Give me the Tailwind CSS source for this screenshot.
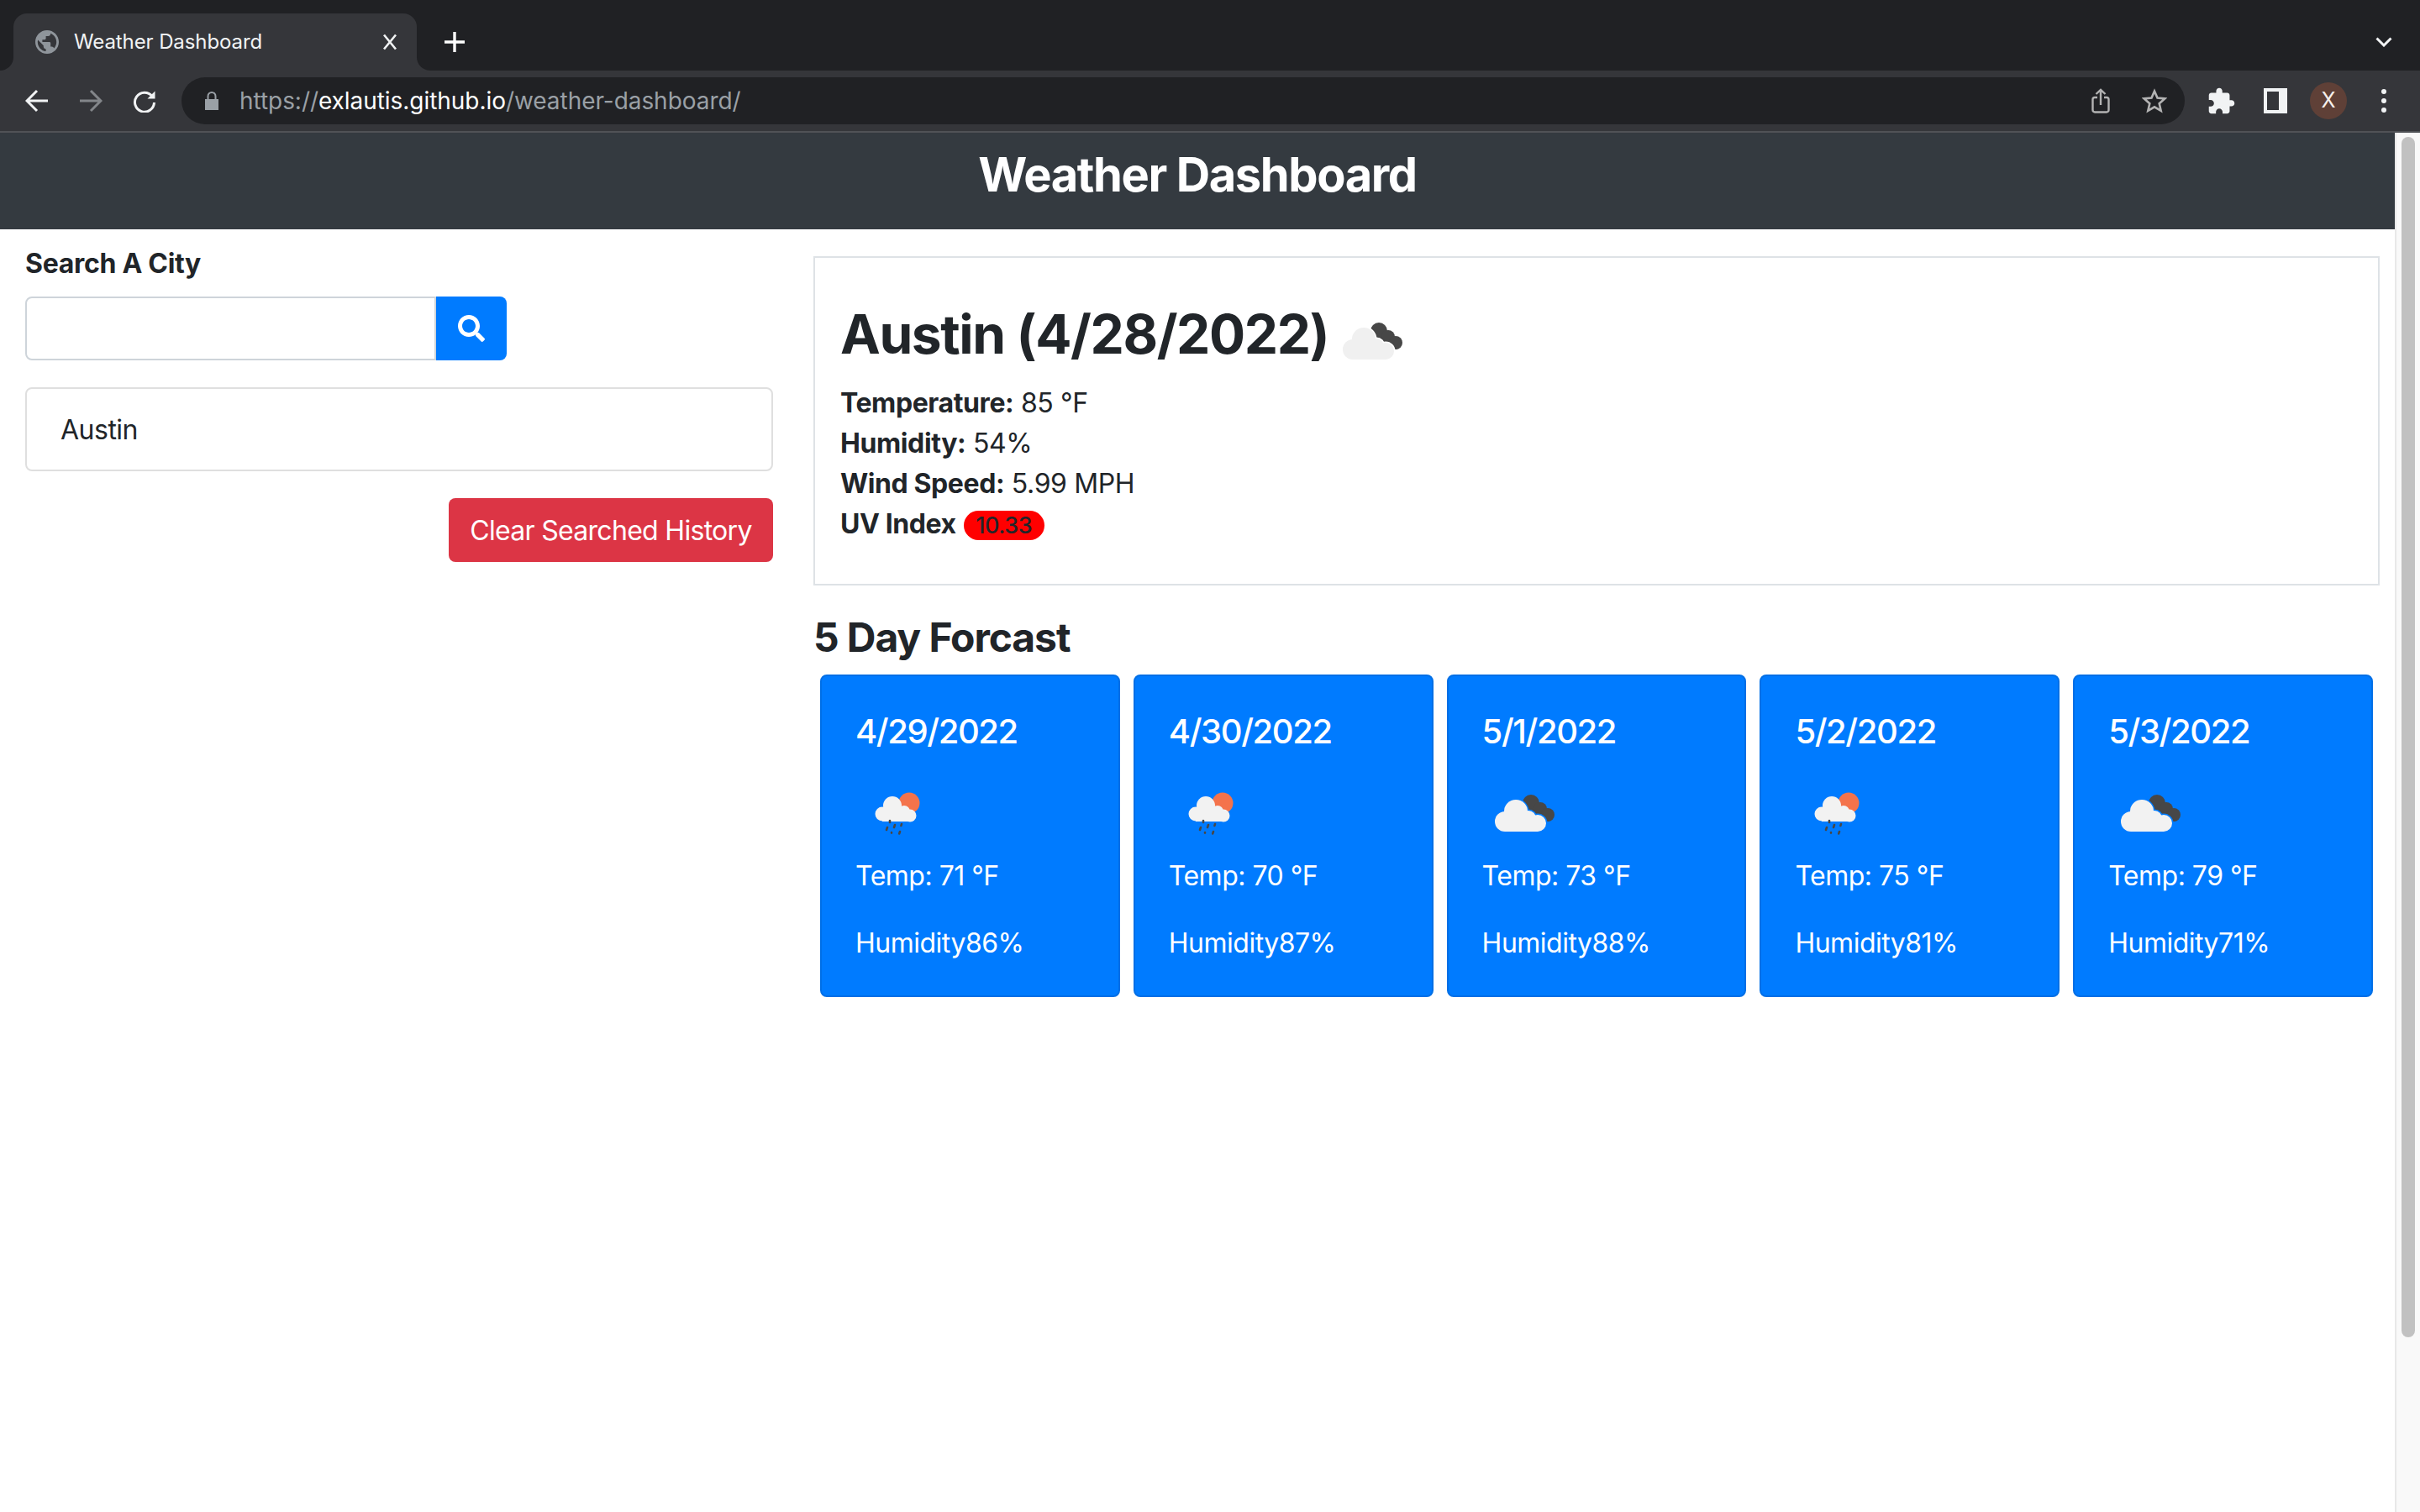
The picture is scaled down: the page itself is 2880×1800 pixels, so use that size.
<!DOCTYPE html>
<html lang="en">
<head>
<meta charset="utf-8">
<title>Weather Dashboard</title>
<script src="https://cdn.jsdelivr.net/npm/@tailwindcss/browser@4"></script>
</head>
<body class="w-[2880px] h-[1800px] overflow-hidden bg-white text-[#212529] font-['Inter','Liberation_Sans',sans-serif]">
<svg class="absolute w-0 h-0" aria-hidden="true">
  <defs>
    <mask id="gap" maskUnits="userSpaceOnUse" x="0" y="0" width="100" height="109">
      <rect width="100" height="109" fill="white"/>
      <g fill="black" stroke="black" stroke-width="3">
        <circle cx="27" cy="68" r="12"/><circle cx="40" cy="56" r="14"/><circle cx="55" cy="64" r="9"/><circle cx="66" cy="70" r="10"/>
      </g>
    </mask>
    <symbol id="cloudy" viewBox="0 0 100 109">
      <g fill="#474747" mask="url(#gap)">
        <circle cx="58" cy="46" r="10"/><circle cx="69" cy="53" r="8"/><circle cx="78" cy="60" r="8"/><path d="M50 46 L80 68 L70 68 L50 56Z"/>
      </g>
      <g fill="currentColor">
        <circle cx="27" cy="68" r="12"/><circle cx="40" cy="56" r="14"/><circle cx="55" cy="64" r="9"/><circle cx="66" cy="70" r="10"/><rect x="27" y="62" width="39" height="18"/>
      </g>
    </symbol>
    <symbol id="rain" viewBox="0 0 100 109">
      <circle cx="64" cy="46" r="12.5" fill="#f4734b"/>
      <g fill="#f2f2f2">
        <circle cx="32" cy="59" r="8.5"/><circle cx="44" cy="49" r="11"/><circle cx="58" cy="56" r="7"/><circle cx="65" cy="61" r="7.5"/><rect x="32" y="56" width="33" height="12"/>
      </g>
      <g stroke="#474747" stroke-width="2.6" stroke-linecap="round">
        <path d="M41 67v2M47 72l-1 3M38 75l-1 3M55 71l-.6 2M43 81v.6M53 80l-.8 2.4"/>
      </g>
    </symbol>
  </defs>
</svg>

<div class="h-[84px] bg-[#202124] flex items-end pl-4 relative">
  <div class="relative w-[480px] h-[68px] bg-[#35363a] rounded-t-2xl flex items-center pl-[26px] pr-[24px]">
    <span class="absolute left-[-16px] bottom-0 w-4 h-4 bg-[#35363a]"><span class="block w-4 h-4 bg-[#202124] rounded-br-2xl"></span></span>
    <span class="absolute right-[-16px] bottom-0 w-4 h-4 bg-[#35363a]"><span class="block w-4 h-4 bg-[#202124] rounded-bl-2xl"></span></span>
    <svg class="w-7 h-7 shrink-0" viewBox="2 2 20 20" fill="#8f959b"><path d="M12 2C6.48 2 2 6.48 2 12s4.48 10 10 10 10-4.48 10-10S17.52 2 12 2zm-1 17.93c-3.95-.49-7-3.85-7-7.93 0-.62.08-1.21.21-1.79L9 15v1c0 1.1.9 2 2 2v1.93zm6.9-2.54c-.26-.81-1-1.39-1.9-1.39h-1v-3c0-.55-.45-1-1-1H8v-2h2c.55 0 1-.45 1-1V7h2c1.1 0 2-.9 2-2v-.41c2.93 1.19 5 4.06 5 7.41 0 2.08-.8 3.97-2.1 5.39z"/></svg>
    <span class="ml-[18px] text-[24px] leading-none text-[#f1f3f4] flex-1 whitespace-nowrap tracking-[-0.1px]">Weather Dashboard</span>
    <svg class="w-4 h-5" viewBox="0 0 16 20" stroke="#f1f3f4" stroke-width="2.6" fill="none"><path d="M1 1.5 15 18.5M15 1.5 1 18.5"/></svg>
  </div>
  <svg class="ml-[32px] mb-[21px] w-[26px] h-[26px]" viewBox="0 0 26 26" stroke="#ffffff" stroke-width="3.4" fill="none"><path d="M13 1v24M1 13h24"/></svg>
  <svg class="absolute left-[2827px] top-[44px] w-5 h-3" viewBox="0 0 20 12" stroke="#f1f3f4" stroke-width="3" fill="none"><path d="M1.5 1.5 10 10l8.5-8.5"/></svg>
</div>

<div class="h-[74px] bg-[#35363a] border-b-2 border-[#505256] flex items-start">
  <div class="h-[72px] w-[216px] relative shrink-0 flex items-center pl-[30px] gap-[36px]">
    <svg class="w-7 h-7 shrink-0" viewBox="0 0 28 28" stroke="#f1f3f4" stroke-width="3" fill="none"><path d="M27 14H3M14 2 2 14l12 12"/></svg>
    <svg class="w-7 h-7 shrink-0" viewBox="0 0 28 28" stroke="#83868a" stroke-width="3" fill="none"><path d="M1 14h24M14 2l12 12-12 12"/></svg>
    <svg class="w-7 h-7 shrink-0" viewBox="0 0 28 28" stroke="#f1f3f4" stroke-width="3" fill="none"><path d="M23 8.5A11.5 11.5 0 1 0 25.5 16"/><path d="M26.5 2.5v9h-9z" fill="#f1f3f4" stroke="none"/></svg>
  </div>
  <div class="mt-2 w-[2384px] h-[56px] rounded-full bg-[#202124] flex items-center pl-[28px] pr-[20px] shrink-0">
    <svg class="w-4 h-[22px] shrink-0" viewBox="0 0 16 22" fill="#9aa0a6"><path d="M0 9h16v13H0z"/><path d="M3.5 10V5.5a4.5 4.5 0 0 1 9 0V10" fill="none" stroke="#9aa0a6" stroke-width="2"/></svg>
    <span class="ml-[25px] text-[28px] leading-none whitespace-nowrap text-[#9aa0a6] tracking-[-0.05px]">https://<span class="text-white">exlautis.github.io</span>/weather-dashboard/</span>
    <svg class="ml-auto w-[22px] h-[30px] shrink-0" viewBox="0 0 22 30" stroke="#b3b3b3" stroke-width="2.4" fill="none"><path d="M7 11H4a2.5 2.5 0 0 0-2.5 2.5V26A2.500 2.500 0 0 0 4 28.500h14a2.500 2.500 0 0 0 2.500-2.500V13.500A2.500 2.500 0 0 0 18 11h-3"/><path d="M11 20V2M5.500 7 11 1.800 16.500 7"/></svg>
    <svg class="ml-[38px] w-[30px] h-[30px] shrink-0" viewBox="0 0 30 30" stroke="#b3b3b3" stroke-width="2.600" fill="none"><path d="M15 3.500l3.500 8.100 8.800.8-6.600 5.800 2 8.600-7.700-4.500-7.700 4.500 2-8.600-6.600-5.800 8.800-.8z"/></svg>
    <span class="w-[1px]"></span>
  </div>
  <div class="h-[72px] flex-1 flex items-center pl-[28px] gap-[32px]">
    <svg class="w-8 h-8 shrink-0 mr-[2px]" viewBox="1.500 .5 22 22" fill="#f1f3f4"><path d="M20.500 11H19V7c0-1.100-.9-2-2-2h-4V3.500C13 2.120 11.880 1 10.500 1S8 2.120 8 3.500V5H4c-1.100 0-1.990.9-1.990 2v3.800H3.500c1.490 0 2.700 1.210 2.700 2.700s-1.210 2.700-2.700 2.700H2V20c0 1.100.9 2 2 2h3.800v-1.500c0-1.490 1.210-2.700 2.700-2.700 1.490 0 2.700 1.210 2.700 2.700V22H17c1.100 0 2-.9 2-2v-4h1.500c1.380 0 2.500-1.120 2.500-2.500S21.880 11 20.500 11z"/></svg>
    <span class="w-7 h-[30px] shrink-0 bg-[#f1f3f4] flex items-stretch pl-1 pr-[10px] py-1"><span class="flex-1 bg-[#35363a]"></span></span>
    <span class="w-11 h-11 shrink-0 -ml-[5px] rounded-full bg-[#5f4037] text-[#f6efec] text-[25px] flex items-center justify-center">X</span>
    <span class="w-[6px] shrink-0 ml-[9px] flex flex-col gap-[5px]"><span class="h-[6px] rounded-full bg-[#f1f3f4]"></span><span class="h-[6px] rounded-full bg-[#f1f3f4]"></span><span class="h-[6px] rounded-full bg-[#f1f3f4]"></span></span>
  </div>
</div>

<div class="flex h-[1642px]">
  <main class="w-[2850px] shrink-0">
    <header class="h-[115px] bg-[#343a40] flex items-start justify-center pt-[17px]">
      <h1 class="text-[56px] leading-[66px] font-bold text-white tracking-[-1.4px] whitespace-nowrap">Weather Dashboard</h1>
    </header>
    <div class="flex">
      <section class="w-[968px] shrink-0 pl-[30px] pt-[21px]">
        <h2 class="text-[32px] leading-[40px] font-bold tracking-[-0.3px]">Search A City</h2>
        <div class="mt-[19px] flex w-[573px] h-[76px]">
          <div class="flex-1 border-2 border-[#ced4da] rounded-l-lg bg-white"></div>
          <div class="w-[84px] rounded-r-lg bg-[#007bff] flex items-center justify-center">
            <svg class="w-8 h-8" viewBox="0 0 512 512" fill="#ffffff"><path d="M505 442.700L405.300 343c-4.500-4.500-10.600-7-17-7H372c27.600-35.300 44-79.700 44-128C416 93.100 322.900 0 208 0S0 93.100 0 208s93.100 208 208 208c48.300 0 92.700-16.400 128-44v16.300c0 6.400 2.500 12.500 7 17l99.700 99.700c9.400 9.400 24.600 9.400 33.900 0l28.300-28.300c9.400-9.400 9.400-24.600.1-34zM208 336c-70.700 0-128-57.200-128-128 0-70.700 57.200-128 128-128 70.700 0 128 57.200 128 128 0 70.700-57.200 128-128 128z"/></svg>
          </div>
        </div>
        <div class="mt-[32px] w-[890px] h-[100px] border-2 border-[#dfdfdf] rounded-lg flex items-center pl-[40px] pt-[2px] text-[32px] tracking-[-0.5px]">Austin</div>
        <div class="mt-[32px] w-[890px] flex justify-end">
          <button class="w-[386px] h-[76px] pt-[2px] rounded-lg bg-[#dc3545] text-white text-[32px] tracking-[-0.7px] whitespace-nowrap">Clear Searched History</button>
        </div>
      </section>
      <section class="w-[1864px] shrink-0 pt-[32px]">
        <div class="h-[392px] border-2 border-[#dee2e6] pl-[30px] pt-[53px]">
          <div class="flex items-start h-[80px]">
            <h2 class="text-[64px] leading-[76px] font-bold whitespace-nowrap tracking-[-1.4px]">Austin (4/28/2022)</h2>
            <svg class="ml-[2px] -mt-[12px] w-[100px] h-[109px] text-[#f0f0f0] shrink-0" viewBox="0 0 100 109"><use href="#cloudy"/></svg>
          </div>
          <div class="mt-[16px] text-[32px] leading-[48px] tracking-[-0.4px]">
            <p><b class="font-bold">Temperature:</b> 85 °F</p>
            <p><b class="font-bold">Humidity:</b> 54%</p>
            <p><b class="font-bold">Wind Speed:</b> 5.99 MPH</p>
            <p class="flex items-center"><b class="font-bold">UV Index</b><span class="ml-[9px] mt-[3px] w-[96px] h-[35px] rounded-[18px] bg-[#ff0000] text-[#212529] text-[27px] font-medium leading-[35px] text-center">10.33</span></p>
          </div>
        </div>
        <h3 class="mt-[32px] text-[48px] leading-[60px] font-bold tracking-[-1.1px]">5 Day Forcast</h3>
        <div class="mt-[14px] ml-2 w-[1848px] grid grid-cols-5 gap-4">
          <article class="h-[384px] bg-[#007bff] border-2 border-[#006fe6] rounded-lg pl-[40px] pr-[30px] pt-[42px] text-white">
            <h5 class="text-[40px] leading-[48px] font-medium tracking-[-1.4px]">4/29/2022</h5>
            <svg class="mt-[15px] w-[100px] h-[109px]" viewBox="0 0 100 109"><use href="#rain"/></svg>
            <p class="text-[32px] leading-[48px] tracking-[-0.5px]">Temp: 71 °F</p>
            <p class="mt-[32px] text-[32px] leading-[48px] tracking-[-0.5px]">Humidity86%</p>
          </article>
          <article class="h-[384px] bg-[#007bff] border-2 border-[#006fe6] rounded-lg pl-[40px] pr-[30px] pt-[42px] text-white">
            <h5 class="text-[40px] leading-[48px] font-medium tracking-[-1.4px]">4/30/2022</h5>
            <svg class="mt-[15px] w-[100px] h-[109px]" viewBox="0 0 100 109"><use href="#rain"/></svg>
            <p class="text-[32px] leading-[48px] tracking-[-0.5px]">Temp: 70 °F</p>
            <p class="mt-[32px] text-[32px] leading-[48px] tracking-[-0.5px]">Humidity87%</p>
          </article>
          <article class="h-[384px] bg-[#007bff] border-2 border-[#006fe6] rounded-lg pl-[40px] pr-[30px] pt-[42px] text-white">
            <h5 class="text-[40px] leading-[48px] font-medium tracking-[-1.4px]">5/1/2022</h5>
            <svg class="mt-[15px] w-[100px] h-[109px] text-[#f2f2f2]" viewBox="0 0 100 109"><use href="#cloudy"/></svg>
            <p class="text-[32px] leading-[48px] tracking-[-0.5px]">Temp: 73 °F</p>
            <p class="mt-[32px] text-[32px] leading-[48px] tracking-[-0.5px]">Humidity88%</p>
          </article>
          <article class="h-[384px] bg-[#007bff] border-2 border-[#006fe6] rounded-lg pl-[40px] pr-[30px] pt-[42px] text-white">
            <h5 class="text-[40px] leading-[48px] font-medium tracking-[-1.4px]">5/2/2022</h5>
            <svg class="mt-[15px] w-[100px] h-[109px]" viewBox="0 0 100 109"><use href="#rain"/></svg>
            <p class="text-[32px] leading-[48px] tracking-[-0.5px]">Temp: 75 °F</p>
            <p class="mt-[32px] text-[32px] leading-[48px] tracking-[-0.5px]">Humidity81%</p>
          </article>
          <article class="h-[384px] bg-[#007bff] border-2 border-[#006fe6] rounded-lg pl-[40px] pr-[30px] pt-[42px] text-white">
            <h5 class="text-[40px] leading-[48px] font-medium tracking-[-1.4px]">5/3/2022</h5>
            <svg class="mt-[15px] w-[100px] h-[109px] text-[#f2f2f2]" viewBox="0 0 100 109"><use href="#cloudy"/></svg>
            <p class="text-[32px] leading-[48px] tracking-[-0.5px]">Temp: 79 °F</p>
            <p class="mt-[32px] text-[32px] leading-[48px] tracking-[-0.5px]">Humidity71%</p>
          </article>
        </div>
      </section>
    </div>
  </main>
  <aside class="flex-1 bg-[#f9f9f9] border-l-2 border-[#e8e8e8] pl-[6px] pt-[5px]">
    <div class="w-4 h-[1429px] rounded-full bg-[#c1c1c1]"></div>
  </aside>
</div>
</body>
</html>
